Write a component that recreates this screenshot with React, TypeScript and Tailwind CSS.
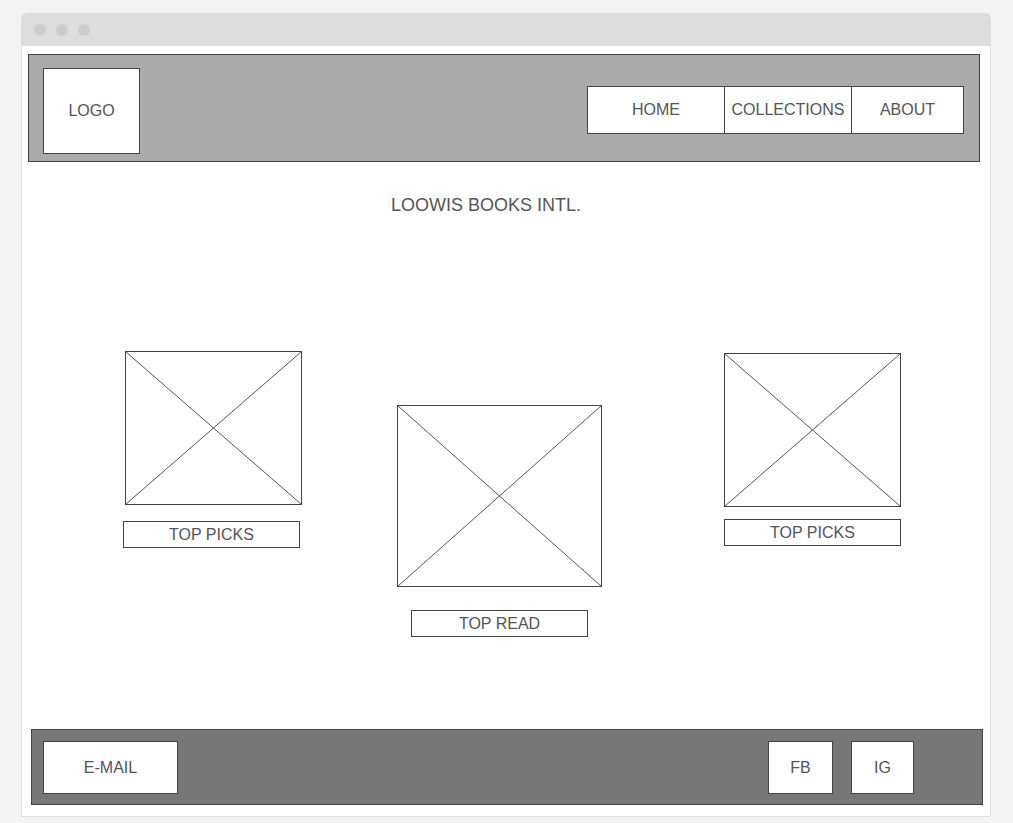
const font = { fontFamily: '"Liberation Sans", Arial, sans-serif' };

function Placeholder({ w, h }: { w: string; h: string }) {
  return (
    <div className={`${w} ${h} border border-[#444] bg-white`}>
      <svg className="w-full h-full block" viewBox="0 0 100 100" preserveAspectRatio="none">
        <line x1="0" y1="0" x2="100" y2="100" stroke="#555" strokeWidth="1" vectorEffect="non-scaling-stroke" />
        <line x1="100" y1="0" x2="0" y2="100" stroke="#555" strokeWidth="1" vectorEffect="non-scaling-stroke" />
      </svg>
    </div>
  );
}

function Label({ children, className = "" }: { children: string; className?: string }) {
  return (
    <div
      className={`w-[177px] h-[27px] border border-[#444] bg-white flex items-center justify-center text-[16px] text-[#555] ${className}`}
    >
      {children}
    </div>
  );
}

export default function App() {
  return (
    <div className="w-[1013px] h-[823px] bg-[#f4f4f4] pt-[13px] pl-[21px]" style={font}>
      <div className="w-[970px] h-[804px] border border-[#dddddd] rounded-t-[5px] bg-white flex flex-col overflow-hidden">
        {/* browser chrome */}
        <div className="h-[32px] bg-[#dddddd] flex items-center gap-[10px] pl-[12px] shrink-0">
          <span className="w-[12px] h-[12px] rounded-full bg-[#cdcdcd]" />
          <span className="w-[12px] h-[12px] rounded-full bg-[#cdcdcd]" />
          <span className="w-[12px] h-[12px] rounded-full bg-[#cdcdcd]" />
        </div>

        <div className="flex-1 flex flex-col">
          {/* header */}
          <header className="mt-[8px] ml-[6px] w-[952px] h-[108px] bg-[#aaaaaa] border border-[#444] flex items-start">
            <div className="ml-[14px] mt-[13px] w-[97px] h-[86px] bg-white border border-[#444] flex items-center justify-center text-[16px] text-[#555]">
              LOGO
            </div>
            <nav className="ml-auto mr-[15px] mt-[31px] flex h-[48px] border border-[#444] bg-white text-[16px] text-[#555]">
              <div className="w-[137px] flex items-center justify-center border-r border-[#444]">HOME</div>
              <div className="w-[127px] flex items-center justify-center border-r border-[#444]">COLLECTIONS</div>
              <div className="w-[111px] flex items-center justify-center">ABOUT</div>
            </nav>
          </header>

          <h1 className="mt-[29px] h-[28px] leading-[28px] pr-[40px] text-center text-[18px] text-[#555] font-normal">
            LOOWIS BOOKS INTL.
          </h1>

          {/* featured books */}
          <div className="mt-[132px] ml-[101px] flex items-start">
            <div className="flex flex-col">
              <div className="ml-[2px]">
                <Placeholder w="w-[177px]" h="h-[154px]" />
              </div>
              <Label className="mt-[16px]">TOP PICKS</Label>
            </div>
            <div className="ml-[95px] mt-[54px] flex flex-col">
              <Placeholder w="w-[205px]" h="h-[182px]" />
              <Label className="mt-[23px] ml-[14px]">TOP READ</Label>
            </div>
            <div className="ml-[122px] mt-[2px] flex flex-col">
              <Placeholder w="w-[177px]" h="h-[154px]" />
              <Label className="mt-[12px]">TOP PICKS</Label>
            </div>
          </div>

          {/* footer */}
          <footer className="mt-auto mb-[11px] ml-[9px] w-[952px] h-[76px] bg-[#777777] border border-[#444] flex items-start pt-[11px] pl-[11px] text-[16px] text-[#555]">
            <div className="w-[135px] h-[53px] bg-white border border-[#444] flex items-center justify-center">E-MAIL</div>
            <div className="ml-auto w-[65px] h-[53px] bg-white border border-[#444] flex items-center justify-center">FB</div>
            <div className="ml-[18px] mr-[68px] w-[63px] h-[53px] bg-white border border-[#444] flex items-center justify-center">IG</div>
          </footer>
        </div>
      </div>
    </div>
  );
}
